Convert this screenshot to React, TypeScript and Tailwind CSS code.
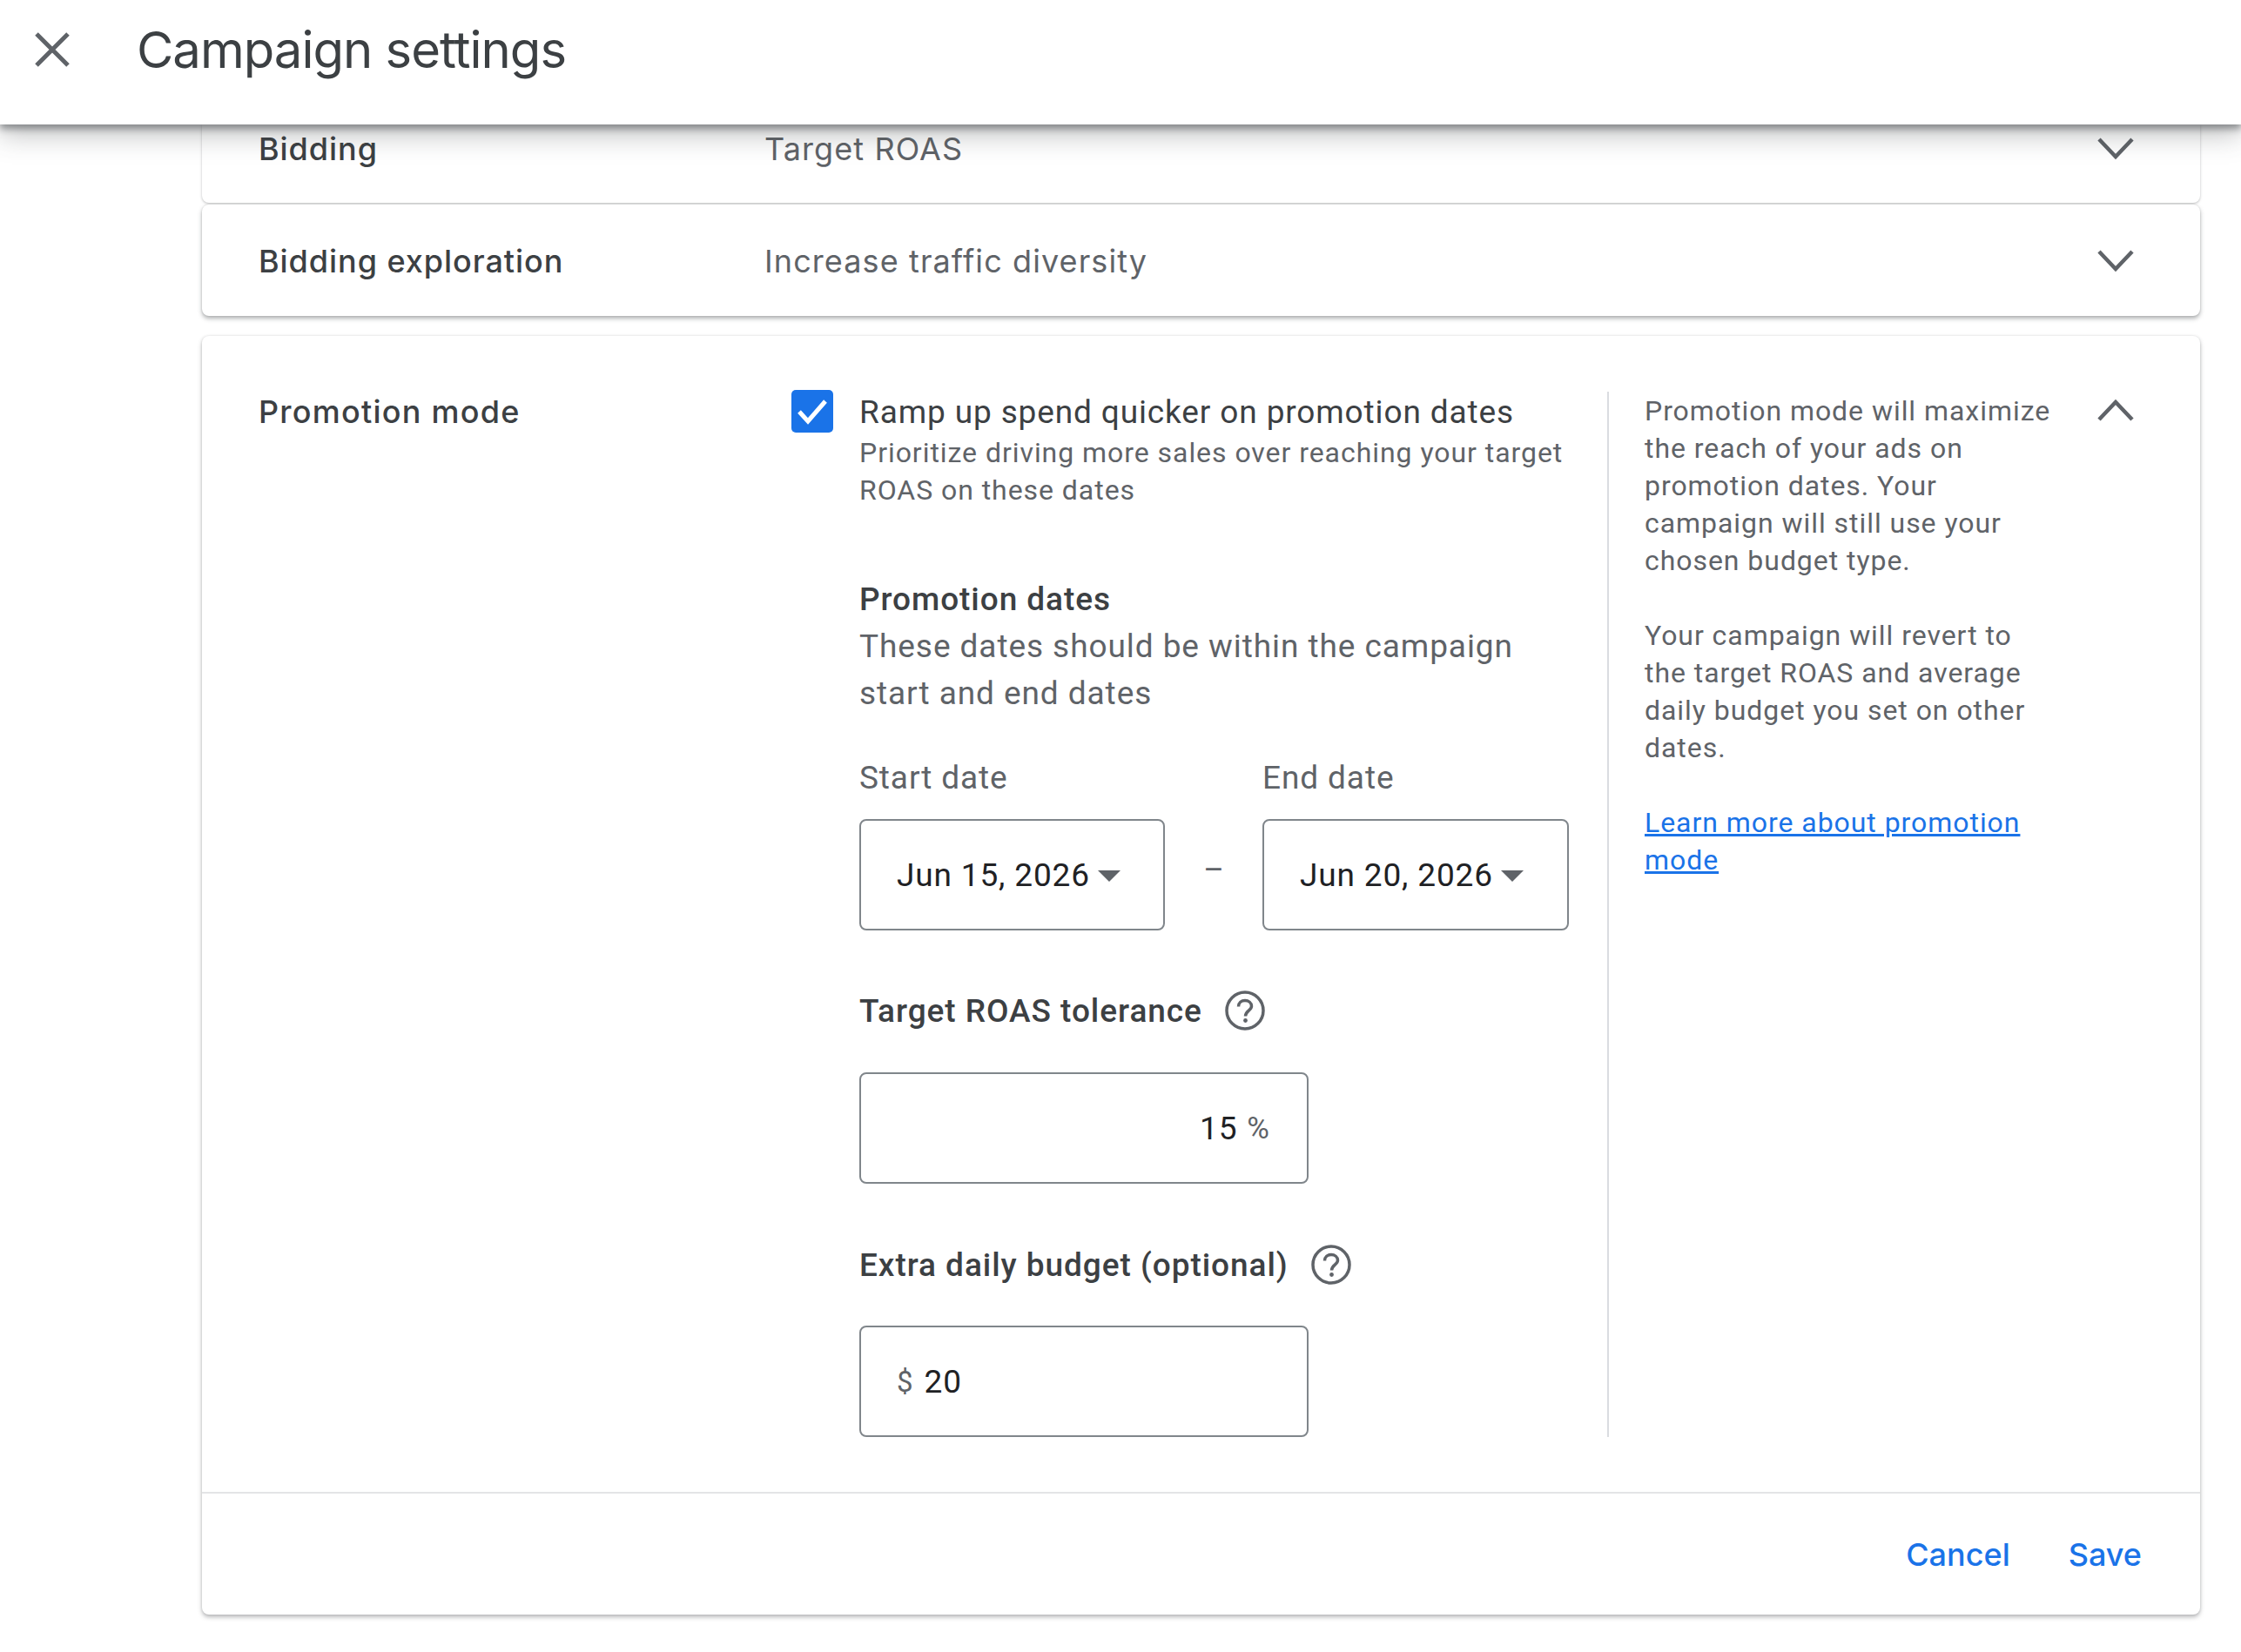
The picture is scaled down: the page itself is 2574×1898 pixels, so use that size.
const ROBOTO = "font-['Roboto',sans-serif]";

function Chevron({ up }: { up?: boolean }) {
  return (
    <svg width="42" height="26" viewBox="0 0 42 26" fill="none" className="block">
      <path d={up ? 'M2 24 L21 4 L40 24' : 'M2 2 L21 22 L40 2'} stroke="#5f6368" strokeWidth="4.5" />
    </svg>
  );
}

function HelpIcon() {
  return (
    <svg width="46" height="46" viewBox="0 0 46 46" fill="none" className="block">
      <circle cx="23" cy="23" r="21" stroke="#5f6368" strokeWidth="3.5" />
      <path d="M15.5 18.5 C15.5 14 19 11.5 23 11.5 C27 11.5 30.5 14 30.5 18 C30.5 23 23.5 23.5 23.5 29.5" stroke="#5f6368" strokeWidth="3.5" />
      <circle cx="23.5" cy="34.5" r="2.4" fill="#5f6368" />
    </svg>
  );
}

function DateBox({ label, value, width }: { label: string; value: string; width: string }) {
  return (
    <div className={width}>
      <div className="text-[37px] leading-[48px] -mb-[2px] text-[#5f6368] tracking-[0.9px]">{label}</div>
      <div className="mt-[25px] h-[128px] border-2 border-[#80868b] rounded-[8px] flex items-center pl-[41px] pt-[2px]">
        <span className="text-[37px] text-[#202124] tracking-[0.85px]">{value}</span>
        <span className="ml-[9px] w-0 h-0 border-x-[13px] border-x-transparent border-t-[13px] border-t-[#5f6368]" />
      </div>
    </div>
  );
}

function CollapsedRow({ label, value, className }: { label: string; value: string; className: string }) {
  return (
    <div className={`bg-white flex items-center pl-[65px] pr-[76px] ${className}`}>
      <div className="w-[581px] text-[36px] leading-[46px] font-medium text-[#3c4043] font-['Inter',sans-serif] tracking-[0.95px]">{label}</div>
      <div className="flex-1 text-[36px] leading-[46px] text-[#5f6368] font-['Inter',sans-serif] tracking-[1.1px]">{value}</div>
      <Chevron />
    </div>
  );
}

export default function App() {
  return (
    <div className={`min-h-[1898px] bg-white ${ROBOTO}`}>
      <header className="relative z-10 h-[143px] bg-white flex items-center shadow-[0_5px_8px_rgba(60,64,67,0.5),0_14px_28px_rgba(60,64,67,0.28)]">
        <svg width="40" height="40" viewBox="0 0 40 40" fill="none" className="ml-[40px] mb-[30px]">
          <path d="M2 2 L38 38 M38 2 L2 38" stroke="#5f6368" strokeWidth="5" />
        </svg>
        <h1 className="ml-[77px] mb-[30px] text-[58px] font-normal text-[#3c4043] font-['Inter',sans-serif] tracking-[-1px] leading-[70px]">Campaign settings</h1>
      </header>

      <main className="pl-[232px] pr-[47px]">
        <CollapsedRow
          label="Bidding"
          value="Target ROAS"
          className="h-[90px] pb-[34px] rounded-b-[8px] shadow-[0_1px_3px_rgba(60,64,67,0.35)]"
        />
        <CollapsedRow
          label="Bidding exploration"
          value="Increase traffic diversity"
          className="mt-[2px] h-[128px] pt-[2px] rounded-[8px] shadow-[0_3px_5px_rgba(60,64,67,0.4),0_0_2px_rgba(60,64,67,0.2)]"
        />

        <section className="mt-[23px] bg-white rounded-[8px] shadow-[0_3px_5px_rgba(60,64,67,0.35),0_0_3px_rgba(60,64,67,0.15)]">
          <div className="flex pl-[65px] pr-[76px] pt-[64px] pb-[63px] border-b-2 border-[#e3e4e6]">
            <div className="w-[581px] text-[36px] leading-[46px] font-medium text-[#3c4043] font-['Inter',sans-serif] tracking-[1.25px]">Promotion mode</div>

            <div className="w-[970px] pl-[31px] border-r-2 border-[#dadce0] flex gap-[30px]">
              <div className="w-[48px] h-[49px] -mt-[2px] rounded-[5px] bg-[#1a73e8] flex items-center justify-center">
                <svg width="36" height="30" viewBox="0 0 36 30" fill="none">
                  <path d="M3 15 L13 26 L33 3" stroke="white" strokeWidth="5" />
                </svg>
              </div>

              <div className="flex-1">
                <div className="text-[37px] leading-[48px] -mb-[2px] text-[#3c4043] tracking-[0.87px]">Ramp up spend quicker on promotion dates</div>
                <div className="mt-[3px] text-[32px] leading-[43px] text-[#5f6368] tracking-[0.95px]">
                  Prioritize driving more sales over reaching your target<br />ROAS on these dates
                </div>

                <div className="mt-[80px] text-[37px] leading-[48px] -mb-[2px] font-medium text-[#3c4043] tracking-[0.93px]">Promotion dates</div>
                <div className="mt-[5px] text-[37px] leading-[54px] text-[#5f6368] tracking-[0.93px]">
                  These dates should be within the campaign<br />start and end dates
                </div>

                <div className="mt-[46px] flex">
                  <DateBox label="Start date" value="Jun 15, 2026" width="w-[351px]" />
                  <div className="w-[112px] pt-[107px] text-center text-[36px] leading-[46px] text-[#5f6368]">–</div>
                  <DateBox label="End date" value="Jun 20, 2026" width="w-[352px]" />
                </div>

                <div className="mt-[69px] flex items-center gap-[26px]">
                  <span className="text-[37px] leading-[48px] -mb-[2px] font-medium text-[#3c4043] tracking-[0.95px]">Target ROAS tolerance</span>
                  <HelpIcon />
                </div>
                <div className="mt-[48px] w-[516px] h-[128px] border-2 border-[#80868b] rounded-[8px] flex items-center justify-end pr-[43px] pt-[2px]">
                  <span className="text-[37px] text-[#202124] tracking-[0.85px]">15</span>
                  <span className="ml-[11px] text-[35px] text-[#5f6368]">%</span>
                </div>

                <div className="mt-[70px] flex items-center gap-[26px]">
                  <span className="text-[37px] leading-[48px] -mb-[2px] font-medium text-[#3c4043] tracking-[0.95px]">Extra daily budget (optional)</span>
                  <HelpIcon />
                </div>
                <div className="mt-[47px] w-[516px] h-[128px] border-2 border-[#80868b] rounded-[8px] flex items-center pl-[41px] pt-[2px]">
                  <span className="text-[33px] text-[#5f6368]">$</span>
                  <span className="ml-[13px] text-[37px] text-[#202124] tracking-[0.85px]">20</span>
                </div>
              </div>
            </div>

            <div className="flex-1 pl-[41px] flex justify-between">
              <div className="pt-[1px] text-[32px] leading-[43px] text-[#5f6368] tracking-[0.95px]">
                <p>
                  Promotion mode will maximize<br />the reach of your ads on<br />promotion dates. Your<br />campaign will still use your<br />chosen budget type.
                </p>
                <p className="mt-[43px]">
                  Your campaign will revert to<br />the target ROAS and average<br />daily budget you set on other<br />dates.
                </p>
                <p className="mt-[43px]">
                  <a href="#" className="text-[#1a73e8] underline">Learn more about promotion<br />mode</a>
                </p>
              </div>
              <div className="pt-[8px]">
                <Chevron up />
              </div>
            </div>
          </div>

          <div className="h-[139px] flex items-center justify-end gap-[67px] pr-[67px] text-[36px] font-medium text-[#1a73e8] font-['Inter',sans-serif]">
            <span>Cancel</span>
            <span>Save</span>
          </div>
        </section>
      </main>
    </div>
  );
}
